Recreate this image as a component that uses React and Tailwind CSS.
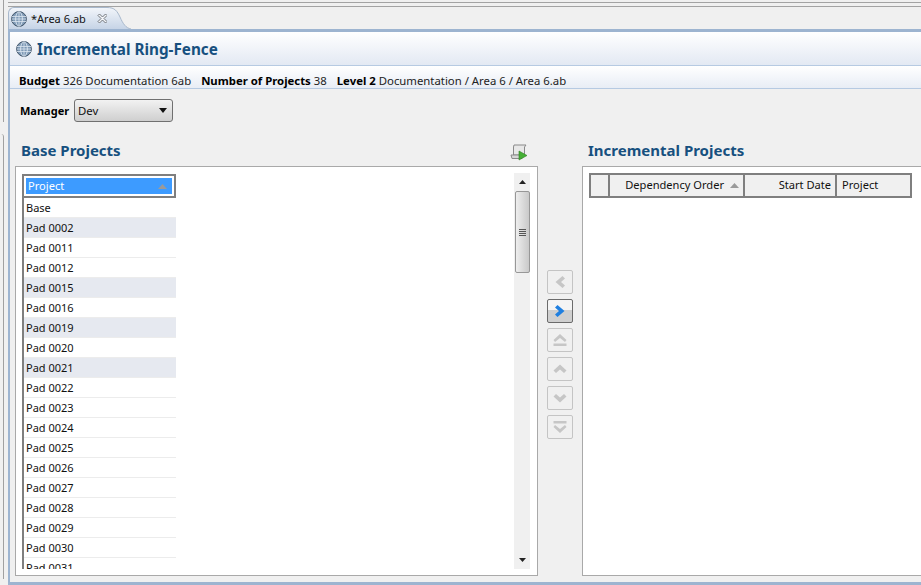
import React from "react";

const font = "font-['Noto_Sans','Open_Sans','DejaVu_Sans',sans-serif]";

const rows = [
  ["Base", false],
  ["Pad 0002", true],
  ["Pad 0011", false],
  ["Pad 0012", false],
  ["Pad 0015", true],
  ["Pad 0016", false],
  ["Pad 0019", true],
  ["Pad 0020", false],
  ["Pad 0021", true],
  ["Pad 0022", false],
  ["Pad 0023", false],
  ["Pad 0024", false],
  ["Pad 0025", false],
  ["Pad 0026", false],
  ["Pad 0027", false],
  ["Pad 0028", false],
  ["Pad 0029", false],
  ["Pad 0030", false],
  ["Pad 0031", false],
];

const Globe = ({ size }) => (
  <svg width={size} height={size} viewBox="0 0 16 16" className="shrink-0">
    <circle cx="8" cy="8" r="7.4" fill="#7f9ab6" stroke="#43566a" />
    <ellipse cx="8" cy="8" rx="3.4" ry="7.2" fill="none" stroke="#dce6f0" strokeWidth="0.9" />
    <path d="M1 5.500h14M0.800 8h14.400M1 10.500h14M8 1v14" stroke="#dce6f0" strokeWidth="0.8" fill="none" />
  </svg>
);

const NavButton = ({ d, active }) => (
  <div
    className={
      active
        ? "w-[26px] h-[24px] rounded-[2px] border border-[#6b6b6b] bg-gradient-to-b from-[#f4f4f4] from-45% to-[#cfcfcf] to-45% flex items-center justify-center"
        : "w-[26px] h-[24px] rounded-[2px] border border-[#c4c4c4] bg-[#f0f0f0] flex items-center justify-center"
    }
  >
    <svg width="16" height="16" viewBox="0 0 16 16">
      <path d={d} fill={active ? "#1f7fe0" : "#c6c6c6"} />
    </svg>
  </div>
);

const HeadCell = ({ className, children }) => (
  <div
    className={`h-full flex items-center border-r-2 border-[#7f7f7f] bg-[#f0f0f0] text-[11.100px] text-[#111] ${className}`}
  >
    {children}
  </div>
);

export default function App() {
  return (
    <div className={`w-[921px] h-[585px] overflow-hidden bg-[#f0f0f0] flex ${font}`}>
      <div className="w-[8px] shrink-0 flex flex-col">
        <div className="h-[122px] w-[4px] border-r border-[#a0a0a0]" />
        <div className="mt-[12px] flex-1 mb-[6px] w-[4px] border-r border-[#a0a0a0] rounded-tr-[3px]" />
      </div>

      <div className="flex-1 min-w-0 flex flex-col">
        <div className="h-[5px] mt-[2px] border-y border-[#a3a3a3] shrink-0" />

        <div className="h-[22px] shrink-0 flex">
          <div className="w-[100px] h-full pl-[2px] flex items-center gap-[4px] rounded-tl-[6px] border-t border-l border-[#a8b8cc] bg-gradient-to-b from-[#f2f5fa] to-[#c6d4e6]">
            <Globe size={16} />
            <span className="text-[11px] leading-none text-[#111] whitespace-nowrap">*Area 6.ab</span>
            <svg width="11" height="11" viewBox="0 0 11 11" className="ml-[7px]">
              <path
                d="M1 2.500L2.500 1 5.500 4 8.500 1 10 2.500 7 5.500 10 8.500 8.500 10 5.500 7 2.500 10 1 8.500 4 5.500z"
                fill="#f4f6fa"
                stroke="#6f747a"
              />
            </svg>
          </div>
          {/* slanted end of the tab */}
          <svg width="24" height="22" viewBox="0 0 24 22" className="shrink-0 -ml-px">
            <defs>
              <linearGradient id="tabEnd" x1="0" y1="0" x2="0" y2="1">
                <stop offset="0" stopColor="#f2f5fa" />
                <stop offset="1" stopColor="#c6d4e6" />
              </linearGradient>
            </defs>
            <path d="M0 0.500C8 0.500 10 4 13 10C16 17 19 21 24 22H0z" fill="url(#tabEnd)" />
            <path d="M0 0.500C8 0.500 10 4 13 10C16 17 19 21 24 22" fill="none" stroke="#a8b8cc" />
          </svg>
        </div>

        <div className="flex-1 min-h-0 flex flex-col border-t-[3px] border-l-[2px] border-b-[3px] border-[#9db4d0] bg-[#f0f0f0]">
          <div className="h-[34px] shrink-0 flex items-center gap-[5px] pl-[6px] bg-gradient-to-b from-white to-[#e3e9f3] border-b border-[#b6cae2]">
            <Globe size={16} />
            <span className="text-[15.250px] font-bold text-[#17507f] whitespace-nowrap pt-[2px]">Incremental Ring-Fence</span>
          </div>

          <div className="h-[23px] shrink-0 flex items-center pl-[9px] pt-[7px] bg-gradient-to-b from-white to-[#e8edf5] border-b border-[#b6cae2] text-[11.350px] text-[#222] whitespace-nowrap">
            <b className="text-black">Budget</b>
            <span className="ml-[3px]">326 Documentation 6ab</span>
            <b className="text-black ml-[10px]">Number of Projects</b>
            <span className="ml-[3px]">38</span>
            <b className="text-black ml-[10px]">Level 2</b>
            <span className="ml-[3px]">Documentation / Area 6 / Area 6.ab</span>
          </div>

          <div className="h-[34px] shrink-0 flex items-center pl-[10px] gap-[4px] pt-[9px]">
            <span className="text-[11px] font-bold text-black w-[50px] whitespace-nowrap mt-[2px]">Manager</span>
            <div className="w-[99px] h-[23px] flex items-center justify-between pl-[3px] pr-[5px] rounded-[3px] border border-[#707070] bg-gradient-to-b from-[#f2f2f2] to-[#cfcfcf]">
              <span className="text-[11.400px] text-[#111]">Dev</span>
              <svg width="8" height="5" viewBox="0 0 8 5">
                <path d="M0 0h8L4 5z" fill="#111" />
              </svg>
            </div>
          </div>

          <div className="flex-1 min-h-0 flex pl-[5px] pt-[16px] pb-[6px]">
            <div className="w-[523px] shrink-0 flex flex-col">
              <div className="h-[27px] shrink-0 flex items-start justify-between pl-[6px] pr-[10px]">
                <span className="text-[15px] font-bold leading-[20px] text-[#17507f] pt-[1px]">Base Projects</span>
                <svg width="18" height="18" viewBox="0 0 18 18" className="mt-[4px]">
                  <path d="M4 2h12l-1.500 2v8H3.500V4z" fill="#e8e8e8" stroke="#8a8a8a" />
                  <path d="M1 12h11v3.500H2z" fill="#d6d6d6" stroke="#8a8a8a" />
                  <path d="M9 8l8 4.500L9 17z" fill="#45b035" stroke="#2d7d22" strokeWidth="0.6" />
                </svg>
              </div>
              <div className="flex-1 min-h-0 flex bg-white border border-[#a9a9a9] pl-[6px] pt-[7px] pr-[7px] pb-[6px]">
                <div className="w-[154px] shrink-0 border-l-2 border-[#7f7f7f] overflow-hidden self-stretch">
                  <div className="h-[24px] -ml-[2px] border-2 border-[#7f7f7f] p-[2px]">
                    <div className="h-full bg-[#3d9bff] flex items-center justify-between pl-[2px] pr-[5px]">
                      <span className="text-[11.100px] text-white">Project</span>
                      <svg width="9" height="5" viewBox="0 0 9 5">
                        <path d="M0 5h9L4.500 0z" fill="#9a9a9a" />
                      </svg>
                    </div>
                  </div>
                  {rows.map(([name, shaded]) => (
                    <div
                      key={name}
                      className={`h-[20px] flex items-center pl-[2px] pt-[2px] text-[11px] text-[#111] border-b border-[#ececec] ${shaded ? "bg-[#e6e9f0]" : "bg-white"}`}
                    >
                      {name}
                    </div>
                  ))}
                </div>
                <div className="flex-1" />
                <div className="w-[16px] shrink-0 -mt-px bg-[#f0f0f0] flex flex-col items-center">
                  <div className="h-[18px] w-full flex items-center justify-center">
                    <svg width="7" height="4" viewBox="0 0 7 4">
                      <path d="M0 4h7L3.500 0z" fill="#222" />
                    </svg>
                  </div>
                  <div className="h-[82px] w-[15px] rounded-[2px] border border-[#979797] bg-gradient-to-r from-[#eeeeee] to-[#c9c9c9] flex flex-col items-center justify-center gap-[1px]">
                    <div className="w-[7px] h-px bg-[#555]" />
                    <div className="w-[7px] h-px bg-[#555]" />
                    <div className="w-[7px] h-px bg-[#555]" />
                    <div className="w-[7px] h-px bg-[#555]" />
                  </div>
                  <div className="flex-1" />
                  <div className="h-[18px] w-full flex items-center justify-center">
                    <svg width="7" height="4" viewBox="0 0 7 4">
                      <path d="M0 0h7L3.500 4z" fill="#222" />
                    </svg>
                  </div>
                </div>
              </div>
            </div>

            <div className="w-[44px] shrink-0 flex flex-col gap-[5px] items-center pt-[131px] pr-[1px]">
              <NavButton d="M10.500 2l2.500 2.500L9 8l4 3.500L10.500 14 3.500 8z" />
              <NavButton active d="M5.500 2L3 4.500 7 8l-4 3.500L5.500 14 12.500 8z" />
              <NavButton d="M8 2l6.500 6-1.500 2L8 6 3 10 1.500 8zM1.500 11.500h13v2.500h-13z" />
              <NavButton d="M8 3.500l6.500 6-2.500 2.500-4-3.500L4 12 1.500 9.500z" />
              <NavButton d="M8 12.500l6.500-6L12 4 8 7.500 4 4 1.500 6.500z" />
              <NavButton d="M1.500 2h13v2.500h-13zM8 14L1.500 8 3 6l5 4 5-4 1.500 2z" />
            </div>

            <div className="flex-1 min-w-0 flex flex-col">
              <div className="h-[27px] shrink-0 pl-[6px]">
                <div className="text-[15px] font-bold leading-[20px] text-[#17507f] whitespace-nowrap pt-[1px]">Incremental Projects</div>
              </div>
              <div className="flex-1 min-h-0 bg-white border-y border-l border-[#a9a9a9] pl-[6px] pt-[6px]">
                <div className="w-[323px] h-[25px] flex border-2 border-r-0 border-[#7f7f7f]">
                  <HeadCell className="w-[19px]" />
                  <HeadCell className="w-[135px] justify-end pr-[4px] gap-[6px]">
                    <span>Dependency Order</span>
                    <svg width="9" height="5" viewBox="0 0 9 5">
                      <path d="M0 5h9L4.500 0z" fill="#9a9a9a" />
                    </svg>
                  </HeadCell>
                  <HeadCell className="w-[92px] justify-end pr-[4px]">Start Date</HeadCell>
                  <HeadCell className="flex-1 pl-[5px]">Project</HeadCell>
                </div>
              </div>
            </div>
          </div>
        </div>
      </div>
    </div>
  );
}
